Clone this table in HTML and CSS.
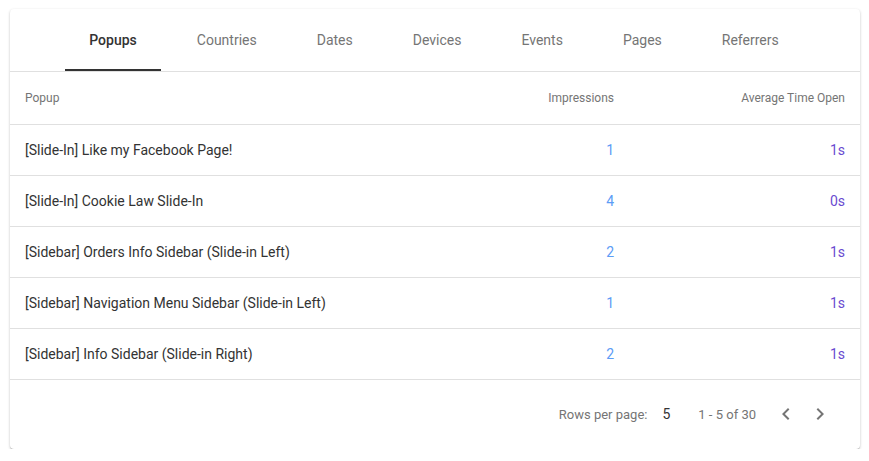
FILE: index.html
```html
<!DOCTYPE html>
<html>
<head>
<meta charset="utf-8">
<link rel="stylesheet" href="styles.css">
</head>
<body>
<div class="card">
  <nav class="tabs">
    <div class="tab active">Popups</div>
    <div class="tab">Countries</div>
    <div class="tab">Dates</div>
    <div class="tab">Devices</div>
    <div class="tab">Events</div>
    <div class="tab">Pages</div>
    <div class="tab">Referrers</div>
  </nav>
  <table class="table">
    <colgroup>
      <col>
      <col class="c-imp">
      <col class="c-time">
    </colgroup>
    <thead>
      <tr><th class="left">Popup</th><th>Impressions</th><th class="last">Average Time Open</th></tr>
    </thead>
    <tbody>
      <tr><td class="left">[Slide-In] Like my Facebook Page!</td><td class="imp">1</td><td class="time last">1s</td></tr>
      <tr><td class="left">[Slide-In] Cookie Law Slide-In</td><td class="imp">4</td><td class="time last">0s</td></tr>
      <tr><td class="left">[Sidebar] Orders Info Sidebar (Slide-in Left)</td><td class="imp">2</td><td class="time last">1s</td></tr>
      <tr><td class="left">[Sidebar] Navigation Menu Sidebar (Slide-in Left)</td><td class="imp">1</td><td class="time last">1s</td></tr>
      <tr><td class="left">[Sidebar] Info Sidebar (Slide-in Right)</td><td class="imp">2</td><td class="time last">1s</td></tr>
    </tbody>
  </table>
  <div class="footer">
    <span class="rows-label">Rows per page:</span>
    <span class="rows-value">5</span>
    <span class="range">1 - 5 of 30</span>
    <span class="nav">
      <svg class="chev" viewBox="0 0 24 24" width="24" height="24"><path d="M15.41 7.41L14 6l-6 6 6 6 1.41-1.41L10.83 12z"/></svg>
      <svg class="chev" viewBox="0 0 24 24" width="24" height="24"><path d="M10 6L8.59 7.41 13.17 12l-4.58 4.59L10 18l6-6z"/></svg>
    </span>
  </div>
</div>
</body>
</html>
```

FILE: styles.css
```css
html, body {
  margin: 0;
  padding: 0;
  background: #fff;
}
body {
  font-family: Roboto, "Liberation Sans", sans-serif;
  padding: 9px 9px 0 10px;
}
.card {
  width: 850px;
  height: 440px;
  background: #fff;
  border-radius: 4px;
  box-shadow: 0 1px 3px rgba(0,0,0,0.2), 0 1px 1px rgba(0,0,0,0.14), 0 2px 1px -1px rgba(0,0,0,0.12);
  display: flex;
  flex-direction: column;
}
.tabs {
  display: flex;
  justify-content: center;
  gap: 12px;
  height: 62px;
  padding-right: 2px;
  border-bottom: 1px solid #e0e0e0;
}
.tab {
  display: flex;
  align-items: center;
  padding: 0 24px 1px 24px;
  font-size: 14px;
  color: #757575;
  height: 62px;
  box-sizing: border-box;
}
.tab.active {
  color: #333;
  font-weight: 500;
  box-shadow: inset 0 -2px 0 #333;
}
.table {
  width: 100%;
  border-collapse: collapse;
  table-layout: fixed;
}
.c-imp { width: 155px; }
.c-time { width: 246px; }
th, td {
  text-align: right;
  padding: 0;
  border-bottom: 1px solid #e0e0e0;
  box-sizing: border-box;
}
th {
  height: 52px;
  font-size: 12px;
  font-weight: 400;
  color: #757575;
}
td {
  height: 51px;
  font-size: 14px;
  color: #333;
}
.left {
  text-align: left;
  padding-left: 15px;
}
.last {
  padding-right: 15px;
}
.imp {
  color: #5c9cf6;
}
.time {
  color: #6a4bd0;
}
.footer {
  flex: 1;
  display: flex;
  align-items: center;
  justify-content: flex-end;
  padding-right: 28px;
  font-size: 13px;
  color: #757575;
}
.rows-value {
  margin-left: 15px;
  font-size: 14px;
  color: #333;
}
.range {
  margin-left: 28px;
}
.nav {
  display: flex;
  gap: 10px;
  margin-left: 18px;
}
.chev {
  fill: #757575;
  display: block;
}
```
